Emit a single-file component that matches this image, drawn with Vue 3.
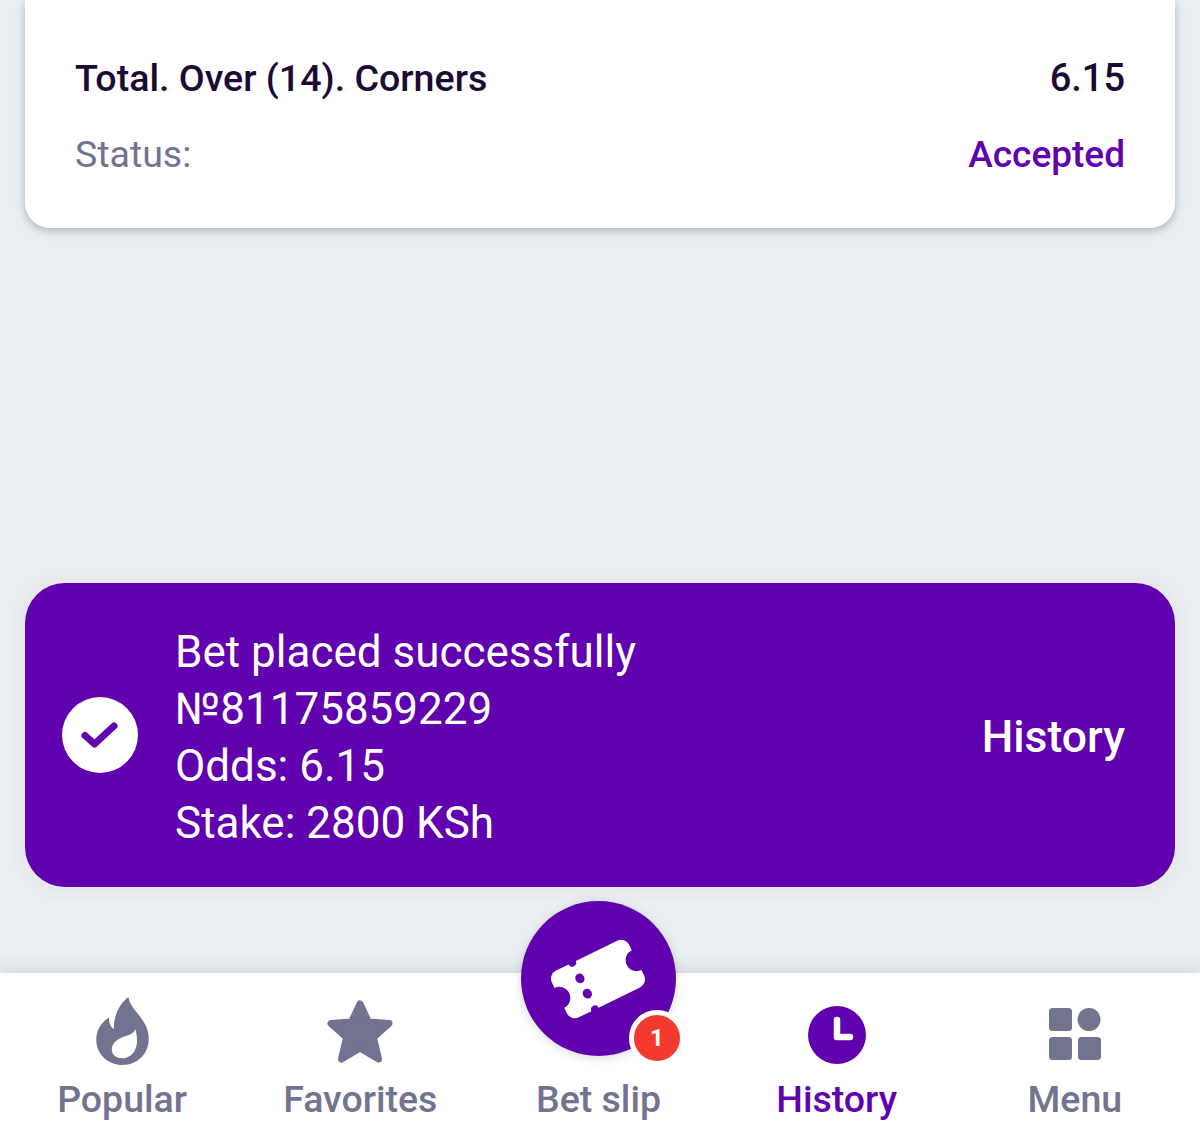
<template>
  <div class="page">
    <section class="card">
      <div class="row">
        <span class="market">Total. Over (14). Corners</span>
        <span class="odds">6.15</span>
      </div>
      <div class="row status-row">
        <span class="status-label">Status:</span>
        <span class="status-value">Accepted</span>
      </div>
    </section>

    <section class="toast">
      <div class="check">
        <svg width="40" height="40" viewBox="0 0 40 40">
          <path d="M5 20.5 L14.5 29 L34 11" fill="none" stroke="#6000ae" stroke-width="7" stroke-linecap="round" stroke-linejoin="round" />
        </svg>
      </div>
      <div class="toast-text">
        <div v-for="line in toastLines" :key="line">{{ line }}</div>
      </div>
      <span class="toast-link">History</span>
    </section>

    <nav class="nav">
      <div v-for="item in navItems" :key="item.label" class="nav-item" :class="{ active: item.active }">
        <div class="nav-icon">
          <svg v-if="item.icon === 'fire'" class="icon-fire" width="55" height="68" viewBox="0 0 56 70">
            <path fill="#72738f" fill-rule="evenodd" d="M34 0 C36 10 43 15 48 23 C53 30 55 36 55 43 C55 59 43 70 28 70 C13 70 1 59 1 44 C1 35 5 27 14 21 C14 26 15 30 19 33 C19 20 24 8 34 0 Z M41 33 C40 38 35 39 29 41 C21 44 17 49 17 54 C17 60 22 63 28 63 C37 63 43 55 43 45 C43 40 42 36 41 33 Z" />
          </svg>
          <svg v-else-if="item.icon === 'star'" class="icon-star" width="66" height="64" viewBox="0 0 66 64">
            <path fill="#72738f" stroke="#72738f" stroke-width="7" stroke-linejoin="round" d="M33 4 L41.5 22 L62 23.5 L46.5 37.5 L51.5 59 L33 48 L14.5 59 L19.5 37.5 L4 23.5 L24.5 22 Z" />
          </svg>
          <div v-else-if="item.icon === 'ticket'" class="ticket-btn">
            <svg width="100" height="88" viewBox="0 0 100 88">
              <g transform="rotate(-26 50 44)">
                <path fill="#fff" fill-rule="evenodd" d="M16 18 H30 A4 4 0 0 0 38 18 H84 A9 9 0 0 1 93 27 V33 A11 11 0 0 0 93 55 V61 A9 9 0 0 1 84 70 H38 A4 4 0 0 0 30 70 H16 A9 9 0 0 1 7 61 V55 A11 11 0 0 0 7 33 V27 A9 9 0 0 1 16 18 Z M34 30.5 A4.5 5 0 1 0 34.01 30.5 Z M34 47.5 A4.5 5 0 1 0 34.01 47.5 Z" />
              </g>
            </svg>
            <span class="badge">1</span>
          </div>
          <svg v-else-if="item.icon === 'clock'" class="icon-clock" width="58" height="58" viewBox="0 0 58 58">
            <circle cx="29" cy="29" r="29" fill="#6000ae" />
            <path d="M29 14 V31 H42" fill="none" stroke="#fff" stroke-width="6.5" stroke-linecap="round" stroke-linejoin="round" />
          </svg>
          <svg v-else class="icon-grid" width="52" height="52" viewBox="0 0 52 52">
            <rect x="0" y="0" width="23" height="23" rx="3.5" fill="#72738f" />
            <circle cx="40" cy="11.5" r="11.5" fill="#72738f" />
            <rect x="0" y="29" width="23" height="23" rx="3.5" fill="#72738f" />
            <rect x="29" y="29" width="23" height="23" rx="3.5" fill="#72738f" />
          </svg>
        </div>
        <span class="nav-label">{{ item.label }}</span>
      </div>
    </nav>
  </div>
</template>

<script setup>
const toastLines = [
  'Bet placed successfully',
  '№81175859229',
  'Odds: 6.15',
  'Stake: 2800 KSh'
]

const navItems = [
  { label: 'Popular', icon: 'fire' },
  { label: 'Favorites', icon: 'star' },
  { label: 'Bet slip', icon: 'ticket' },
  { label: 'History', icon: 'clock', active: true },
  { label: 'Menu', icon: 'grid' }
]
</script>

<style>
html, body {
  margin: 0;
  background: #e9eef2;
}
</style>

<style scoped>
.page {
  display: flex;
  flex-direction: column;
  height: 1147px;
  overflow: hidden;
  background: #e9eef2;
  font-family: Roboto, "Liberation Sans", sans-serif;
}

.card {
  height: 228px;
  box-sizing: border-box;
  margin: 0 25px;
  padding: 55px 50px 0;
  background: #fff;
  border-radius: 0 0 25px 25px;
  box-shadow: 0 3px 8px rgba(60, 70, 90, 0.35);
}

.row {
  display: flex;
  justify-content: space-between;
  align-items: center;
  height: 46px;
}

.status-row {
  margin-top: 30px;
}

.market {
  font-size: 37.6px;
  font-weight: 500;
  color: #1b0a33;
}

.odds {
  font-size: 38px;
  font-weight: 500;
  color: #1b0a33;
}

.status-label {
  font-size: 37.5px;
  color: #72738f;
}

.status-value {
  font-size: 37px;
  font-weight: 500;
  color: #6000ae;
}

.toast {
  display: flex;
  align-items: center;
  height: 304px;
  box-sizing: border-box;
  margin: 355px 25px 0;
  padding: 0 50px 0 37px;
  background: #6000ae;
  border-radius: 40px;
  color: #fff;
  box-shadow: 0 0 0 6px rgba(224, 228, 235, 0.3), 0 0 0 14px rgba(228, 232, 238, 0.2);
}

.check {
  display: flex;
  align-items: center;
  justify-content: center;
  width: 76px;
  height: 76px;
  flex: none;
  border-radius: 50%;
  background: #fff;
}

.toast-text {
  flex: 1;
  margin-left: 37px;
  padding-top: 5px;
  font-size: 44px;
  line-height: 57px;
}

.toast-link {
  padding-top: 4px;
  font-size: 44.5px;
  font-weight: 500;
}

.nav {
  display: grid;
  grid-template-columns: repeat(5, 1fr);
  margin-top: auto;
  height: 174px;
  box-sizing: border-box;
  padding: 0 6px 0 3px;
  background: #fff;
  box-shadow: 0 -6px 14px rgba(60, 70, 90, 0.1);
}

.nav-item {
  display: flex;
  flex-direction: column;
  align-items: center;
  color: #72738f;
}

.nav-item.active {
  color: #6000ae;
}

.nav-icon {
  display: flex;
  align-items: center;
  justify-content: center;
  height: 100px;
  margin-top: 10px;
}

.icon-fire {
  margin-bottom: 4px;
}

.icon-star {
  margin-bottom: 2px;
}

.icon-clock {
  margin-top: 4px;
}

.icon-grid {
  margin-top: 2px;
}

.nav-label {
  font-size: 37.5px;
  font-weight: 500;
  line-height: 44px;
  margin-top: -6px;
}

.ticket-btn {
  position: relative;
  display: flex;
  align-items: center;
  justify-content: center;
  width: 155px;
  height: 155px;
  margin-top: -109px;
  border-radius: 50%;
  background: #6000ae;
  box-shadow: 0 2px 10px rgba(60, 70, 90, 0.2);
}

.badge {
  position: absolute;
  right: -9px;
  bottom: -10px;
  width: 46px;
  height: 46px;
  border: 5px solid #fff;
  border-radius: 50%;
  background: #f43a2e;
  color: #fff;
  font-size: 24px;
  font-weight: 700;
  line-height: 46px;
  text-align: center;
}
</style>
